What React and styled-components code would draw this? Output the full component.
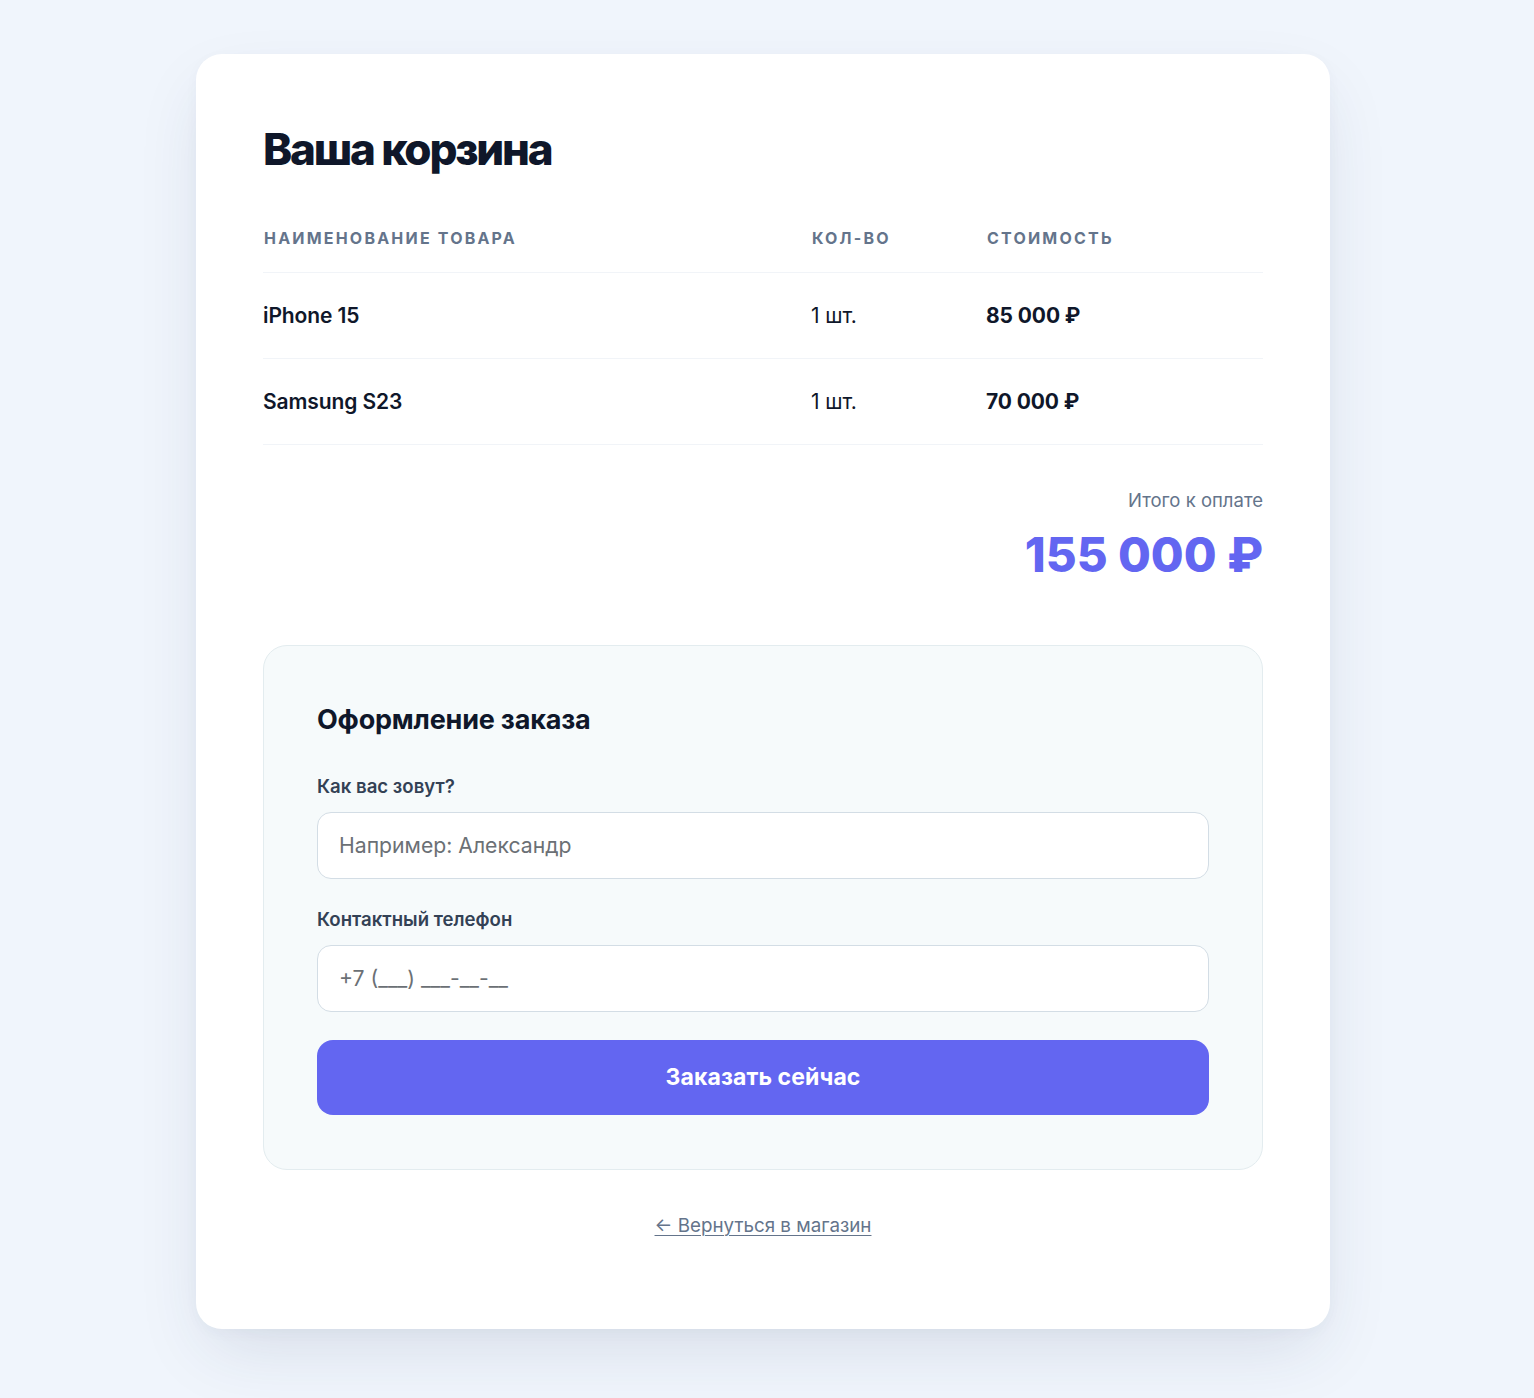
import React from "react";
import styled, { createGlobalStyle } from "styled-components";

const GlobalStyle = createGlobalStyle`
  * { box-sizing: border-box; }
  html, body {
    margin: 0;
    padding: 0;
    background: #f0f5fc;
    font-family: Inter, "Noto Sans", "Liberation Sans", sans-serif;
    color: #0f172a;
  }
`;

const Page = styled.div`
  min-height: 1398px;
  display: flex;
  justify-content: center;
  align-items: flex-start;
  padding: 54px 8px 68px 0;
`;

const Card = styled.main`
  width: 1134px;
  background: #ffffff;
  border-radius: 26px;
  padding: 69px 67px 90px;
  box-shadow: 0 28px 70px -12px rgba(40, 55, 95, 0.13), 0 4px 14px rgba(40, 55, 95, 0.03);
`;

const Title = styled.h1`
  margin: 0 0 27px;
  font-size: 44px;
  line-height: 1.2;
  font-weight: 800;
  letter-spacing: -2.2px;
  color: #0f172a;
`;

const Table = styled.div`
  display: grid;
  grid-template-columns: 548px 175px 1fr;
`;

const HeadCell = styled.div`
  padding: 26px 0 24px 1px;
  font-size: 16px;
  line-height: 19px;
  font-weight: 700;
  letter-spacing: 2.2px;
  text-transform: uppercase;
  color: #64748b;
  border-bottom: 1px solid #f1f4f8;
`;

const Cell = styled.div`
  padding: 27px 0;
  font-size: 21px;
  line-height: 31px;
  font-weight: ${(p) => p.$weight || 400};
  color: #0f172a;
  border-bottom: 1px solid #f1f4f8;
  letter-spacing: -0.1px;
`;

const Summary = styled.div`
  margin-top: 43px;
  display: flex;
  flex-direction: column;
  align-items: flex-end;
`;

const SummaryLabel = styled.div`
  font-size: 18.5px;
  line-height: 25px;
  color: #64748b;
  margin-bottom: 15px;
`;

const SummaryValue = styled.div`
  font-size: 47.5px;
  line-height: 54px;
  font-weight: 800;
  color: #6366f1;
  letter-spacing: 0;
`;

const OrderBox = styled.section`
  margin-top: 63px;
  background: #f6fafb;
  border: 1px solid #e3ecef;
  border-radius: 24px;
  padding: 53px 53px 54px;
  display: flex;
  flex-direction: column;
`;

const OrderTitle = styled.h2`
  margin: 0 0 34px;
  font-size: 27px;
  line-height: 41px;
  font-weight: 700;
  color: #0f172a;
  letter-spacing: -0.2px;
`;

const Field = styled.label`
  display: flex;
  flex-direction: column;
  gap: 13px;
  margin-bottom: ${(p) => p.$mb || "28px"};
`;

const FieldLabel = styled.span`
  font-size: 18.6px;
  line-height: 25px;
  font-weight: 600;
  color: #334155;
`;

const Input = styled.input`
  height: 67px;
  width: 100%;
  border: 1px solid #d3dde5;
  border-radius: 14px;
  background: #ffffff;
  padding: 0 21px;
  font-family: inherit;
  font-size: 21.2px;
  color: #0f172a;
  outline: none;
  &::placeholder {
    color: #6b7075;
  }
`;

const SubmitButton = styled.button`
  height: 75px;
  width: 100%;
  border: none;
  border-radius: 16px;
  background: #6366f1;
  color: #ffffff;
  font-family: inherit;
  font-size: 23px;
  font-weight: 700;
  cursor: pointer;
  letter-spacing: 0.1px;
`;

const BackRow = styled.div`
  margin-top: 42px;
  display: flex;
  justify-content: center;
`;

const BackLink = styled.a`
  font-size: 18.8px;
  line-height: 27px;
  color: #64748b;
  text-decoration: underline;
  text-underline-offset: 3px;
  text-decoration-thickness: 1px;
  cursor: pointer;
`;

const items = [
  { name: "iPhone 15", qty: "1 шт.", price: "85 000 ₽" },
  { name: "Samsung S23", qty: "1 шт.", price: "70 000 ₽" },
];

export default function App() {
  return (
    <>
      <GlobalStyle />
      <Page>
        <Card>
          <Title>Ваша корзина</Title>
          <Table>
            <HeadCell>Наименование товара</HeadCell>
            <HeadCell>Кол-во</HeadCell>
            <HeadCell>Стоимость</HeadCell>
            {items.map((it) => (
              <React.Fragment key={it.name}>
                <Cell $weight={600}>{it.name}</Cell>
                <Cell>{it.qty}</Cell>
                <Cell $weight={700}>{it.price}</Cell>
              </React.Fragment>
            ))}
          </Table>
          <Summary>
            <SummaryLabel>Итого к оплате</SummaryLabel>
            <SummaryValue>155 000 ₽</SummaryValue>
          </Summary>
          <OrderBox>
            <OrderTitle>Оформление заказа</OrderTitle>
            <Field>
              <FieldLabel>Как вас зовут?</FieldLabel>
              <Input placeholder="Например: Александр" />
            </Field>
            <Field>
              <FieldLabel>Контактный телефон</FieldLabel>
              <Input placeholder="+7 (___) ___-__-__" />
            </Field>
            <SubmitButton>Заказать сейчас</SubmitButton>
          </OrderBox>
          <BackRow>
            <BackLink>← Вернуться в магазин</BackLink>
          </BackRow>
        </Card>
      </Page>
    </>
  );
}
